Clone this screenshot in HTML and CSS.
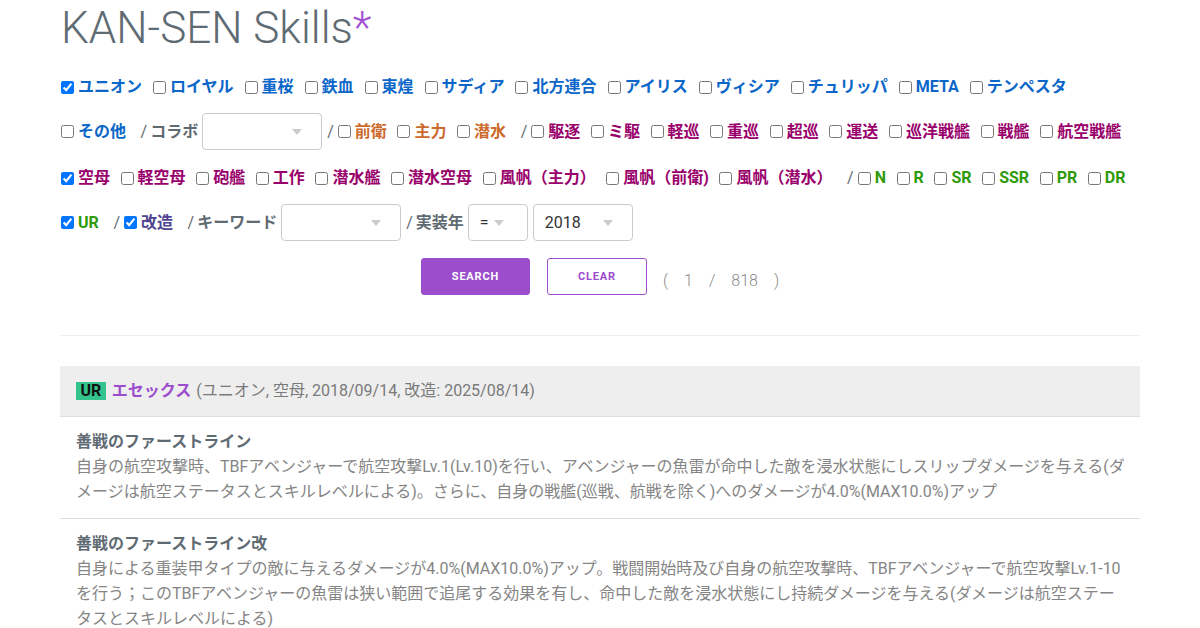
FILE: index.html
```html
<!DOCTYPE html>
<html lang="ja">
<head>
<meta charset="utf-8">
<title>KAN-SEN Skills</title>
<link rel="stylesheet" href="styles.css">
</head>
<body>
<div class="container">
  <h1 class="title">KAN-SEN Skills<span class="star">*</span></h1>

  <div class="filters">
    <div class="row r1">
      <label class="chk nation"><input type="checkbox" checked>ユニオン</label>
      <label class="chk nation"><input type="checkbox">ロイヤル</label>
      <label class="chk nation"><input type="checkbox">重桜</label>
      <label class="chk nation"><input type="checkbox">鉄血</label>
      <label class="chk nation"><input type="checkbox">東煌</label>
      <label class="chk nation"><input type="checkbox">サディア</label>
      <label class="chk nation"><input type="checkbox">北方連合</label>
      <label class="chk nation"><input type="checkbox">アイリス</label>
      <label class="chk nation"><input type="checkbox">ヴィシア</label>
      <label class="chk nation"><input type="checkbox">チュリッパ</label>
      <label class="chk nation"><input type="checkbox">META</label>
      <label class="chk nation"><input type="checkbox">テンペスタ</label>
    </div>
    <div class="row r2">
      <label class="chk nation"><input type="checkbox">その他</label>
      <span class="sep">/</span><span class="lbl">コラボ</span>
      <div class="select w120"><span class="caret"></span></div>
      <span class="sep">/</span>
      <label class="chk role"><input type="checkbox">前衛</label>
      <label class="chk role"><input type="checkbox">主力</label>
      <label class="chk role"><input type="checkbox">潜水</label>
      <span class="sep">/</span>
      <label class="chk type"><input type="checkbox">駆逐</label>
      <label class="chk type"><input type="checkbox">ミ駆</label>
      <label class="chk type"><input type="checkbox">軽巡</label>
      <label class="chk type"><input type="checkbox">重巡</label>
      <label class="chk type"><input type="checkbox">超巡</label>
      <label class="chk type"><input type="checkbox">運送</label>
      <label class="chk type"><input type="checkbox">巡洋戦艦</label>
      <label class="chk type"><input type="checkbox">戦艦</label>
      <label class="chk type"><input type="checkbox">航空戦艦</label>
    </div>
    <div class="row r3">
      <label class="chk type"><input type="checkbox" checked>空母</label>
      <label class="chk type"><input type="checkbox">軽空母</label>
      <label class="chk type"><input type="checkbox">砲艦</label>
      <label class="chk type"><input type="checkbox">工作</label>
      <label class="chk type"><input type="checkbox">潜水艦</label>
      <label class="chk type"><input type="checkbox">潜水空母</label>
      <label class="chk type"><input type="checkbox">風帆（主力）</label>
      <label class="chk type"><input type="checkbox">風帆（前衛)</label>
      <label class="chk type"><input type="checkbox">風帆（潜水）</label>
      <span class="sep">/</span>
      <label class="chk rarity"><input type="checkbox">N</label>
      <label class="chk rarity"><input type="checkbox">R</label>
      <label class="chk rarity"><input type="checkbox">SR</label>
      <label class="chk rarity"><input type="checkbox">SSR</label>
      <label class="chk rarity"><input type="checkbox">PR</label>
      <label class="chk rarity"><input type="checkbox">DR</label>
    </div>
    <div class="row r4">
      <label class="chk rarity"><input type="checkbox" checked>UR</label>
      <span class="sep wide">/</span>
      <label class="chk kai"><input type="checkbox" checked>改造</label>
      <span class="sep wide">/</span><span class="lbl">キーワード</span>
      <div class="select w120"><span class="caret"></span></div>
      <span class="sep">/</span><span class="lbl">実装年</span>
      <div class="select w60"><span class="val">=</span><span class="caret small"></span></div>
      <div class="select w100 gap"><span class="val">2018</span><span class="caret"></span></div>
    </div>
  </div>

  <div class="actions">
    <button class="btn search">SEARCH</button>
    <button class="btn clear">CLEAR</button>
    <div class="count"><span>(</span><span>1</span><span>/</span><span>818</span><span>)</span></div>
  </div>

  <hr class="divider">

  <div class="card">
    <div class="card-head">
      <span class="badge">UR</span>
      <span class="name">エセックス</span>
      <span class="meta">(ユニオン, 空母, 2018/09/14, 改造: 2025/08/14)</span>
    </div>
    <div class="skill">
      <div class="skill-name">善戦のファーストライン</div>
      <div class="skill-desc">自身の航空攻撃時、TBFアベンジャーで航空攻撃Lv.1(Lv.10)を行い、アベンジャーの魚雷が命中した敵を浸水状態にしスリップダメージを与える(ダメージは航空ステータスとスキルレベルによる)。さらに、自身の戦艦(巡戦、航戦を除く)へのダメージが4.0%(MAX10.0%)アップ</div>
    </div>
    <div class="skill">
      <div class="skill-name">善戦のファーストライン改</div>
      <div class="skill-desc">自身による重装甲タイプの敵に与えるダメージが4.0%(MAX10.0%)アップ。戦闘開始時及び自身の航空攻撃時、TBFアベンジャーで航空攻撃Lv.1-10を行う；このTBFアベンジャーの魚雷は狭い範囲で追尾する効果を有し、命中した敵を浸水状態にし持続ダメージを与える(ダメージは航空ステータスとスキルレベルによる)</div>
    </div>
  </div>
</div>
</body>
</html>
```

FILE: styles.css
```css
* { box-sizing: border-box; }

html, body {
  margin: 0;
  padding: 0;
  background: #ffffff;
}

body {
  font-family: Roboto, "Noto Sans CJK JP", sans-serif;
  color: #5f6b73;
  font-size: 16px;
}

.container {
  width: 1080px;
  margin: 0 auto;
}

.title {
  margin: 0;
  font-size: 44px;
  font-weight: 300;
  line-height: 56px;
  color: #5f6b73;
  padding-left: 1px;
}

.title .star {
  color: #a050d0;
}

.filters {
  margin-top: 19px;
  display: flex;
  flex-direction: column;
}

.row {
  display: flex;
  align-items: center;
  flex-wrap: nowrap;
  white-space: nowrap;
}

.r1 { height: 24px; }
.r2 { height: 37px; margin-top: 14px; }
.r3 { height: 24px; margin-top: 16px; }
.r4 { height: 37px; margin-top: 14px; }

.chk {
  display: inline-flex;
  align-items: center;
  font-weight: 700;
  font-size: 16px;
  line-height: 20px;
  margin-right: 9.6px;
}

.r1 .chk {
  margin-right: 10px;
}

.chk input {
  width: 13px;
  height: 13px;
  margin: 0 4px 0 1px;
}

.nation { color: #0a66c8; }
.role { color: #cc6a2c; }
.type { color: #99006b; }
.rarity { color: #2f9a0a; }
.kai { color: #4f4490; }

.sep {
  font-weight: 400;
  color: #5f6b73;
  margin: 0 3px 0 5px;
  line-height: 20px;
}

.sep.wide {
  margin-left: 5px;
}

.lbl {
  font-weight: 700;
  color: #5f6b73;
  line-height: 20px;
}

.select {
  position: relative;
  height: 37px;
  border: 1px solid #cccccc;
  border-radius: 4px;
  background: #ffffff;
  margin-left: 4px;
  display: flex;
  align-items: center;
  padding-left: 11px;
}

.w120 { width: 120px; }
.w60 { width: 60px; }
.w100 { width: 100px; }
.select.gap { margin-left: 5px; }

.select .val {
  font-size: 16px;
  color: #333333;
  font-weight: 400;
}

.caret {
  position: absolute;
  right: 19px;
  top: 15px;
  width: 0;
  height: 0;
  border-left: 5px solid transparent;
  border-right: 5px solid transparent;
  border-top: 6px solid #cccccc;
}

.caret.small {
  right: 23px;
}

.actions {
  margin-top: 17px;
  display: flex;
  justify-content: center;
  align-items: center;
}

.btn {
  height: 37px;
  font-family: Roboto, sans-serif;
  font-weight: 700;
  font-size: 11px;
  letter-spacing: 0.8px;
  border-radius: 3px;
  cursor: pointer;
}

.search {
  width: 109px;
  background: #9c4dcc;
  border: 1px solid #9c4dcc;
  color: #ffffff;
}

.clear {
  width: 100px;
  background: #ffffff;
  border: 1px solid #9c4dcc;
  color: #9c4dcc;
  margin-left: 17px;
}

.count {
  margin-left: 16px;
  display: flex;
  gap: 16px;
  font-size: 16px;
  font-weight: 300;
  color: #8a8a8a;
  padding-top: 8px;
}

.divider {
  margin: 40px 0 0 0;
  border: 0;
  border-top: 1px solid #eeeeee;
}

.card {
  margin-top: 30px;
}

.card-head {
  height: 51px;
  background: #eeeeee;
  border-bottom: 1px solid #dddddd;
  display: flex;
  align-items: center;
  padding: 0 16px;
  font-size: 16px;
  line-height: 20px;
}

.badge {
  background: #33c48e;
  color: #111111;
  font-weight: 700;
  padding: 0 4.5px;
  line-height: 18px;
  height: 18px;
  margin-right: 6px;
}

.name {
  color: #9c4dcc;
  font-weight: 700;
  margin-right: 5px;
}

.meta {
  color: #7a7a7a;
  font-weight: 400;
}

.skill {
  padding: 12px 10px 14px 16px;
  border-bottom: 1px solid #dddddd;
  line-height: 25px;
}

.skill-name {
  font-weight: 700;
  font-size: 16px;
  color: #5f6b73;
}

.skill-desc {
  font-size: 16px;
  font-weight: 400;
  color: #858585;
}
```
